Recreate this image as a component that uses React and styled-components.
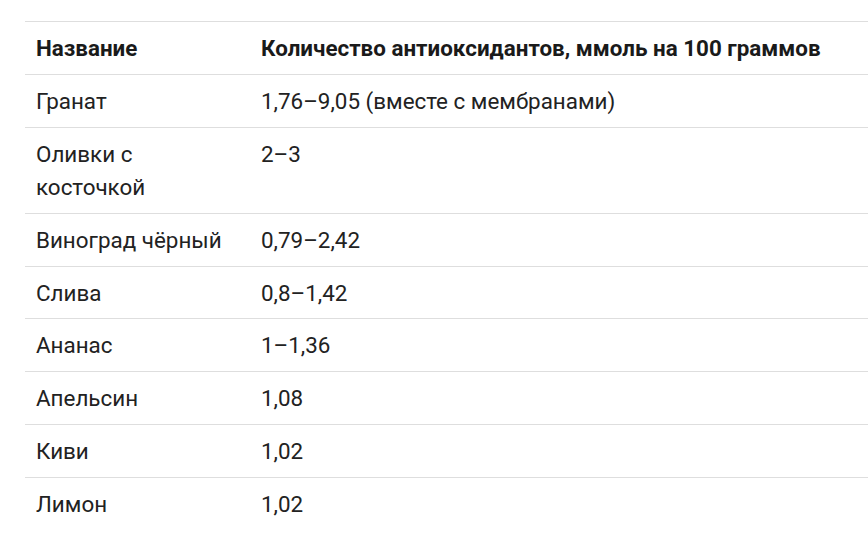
import React from 'react'
import styled, { createGlobalStyle } from 'styled-components'

const GlobalStyle = createGlobalStyle`
    html, body {
        margin: 0;
        padding: 0;
        background: #fff;
        overflow: hidden;
    }
    body {
        font-family: Roboto, "Liberation Sans", sans-serif;
        color: #222;
    }
`

const Wrapper = styled.div`
    padding: 21px 0 0 25px;
`

const Table = styled.table`
    width: 843px;
    border-collapse: collapse;
    font-size: 22.4px;
    line-height: 32.9px;
`

const Row = styled.tr`
    border-top: 1px solid #dedede;
`

const Head = styled.th`
    text-align: left;
    font-weight: 700;
    color: #1a1a1a;
    padding: 10px 11px 9px;
    vertical-align: top;
    white-space: nowrap;
    width: ${p => p.$width || 'auto'};
`

const Cell = styled.td`
    padding: 10px 11px 9px;
    vertical-align: top;
    color: #222;
`

const rows = [
    ['Гранат', '1,76–9,05 (вместе с мембранами)'],
    ['Оливки с косточкой', '2–3'],
    ['Виноград чёрный', '0,79–2,42'],
    ['Слива', '0,8–1,42'],
    ['Ананас', '1–1,36'],
    ['Апельсин', '1,08'],
    ['Киви', '1,02'],
    ['Лимон', '1,02'],
]

const App = () => {
    return (
        <>
            <GlobalStyle />
            <Wrapper>
                <Table>
                    <thead>
                        <Row>
                            <Head $width="203px">Название</Head>
                            <Head>Количество антиоксидантов, ммоль на 100 граммов</Head>
                        </Row>
                    </thead>
                    <tbody>
                        {rows.map(([name, value]) => (
                            <Row key={name}>
                                <Cell>{name}</Cell>
                                <Cell>{value}</Cell>
                            </Row>
                        ))}
                    </tbody>
                </Table>
            </Wrapper>
        </>
    )
}

export default App
